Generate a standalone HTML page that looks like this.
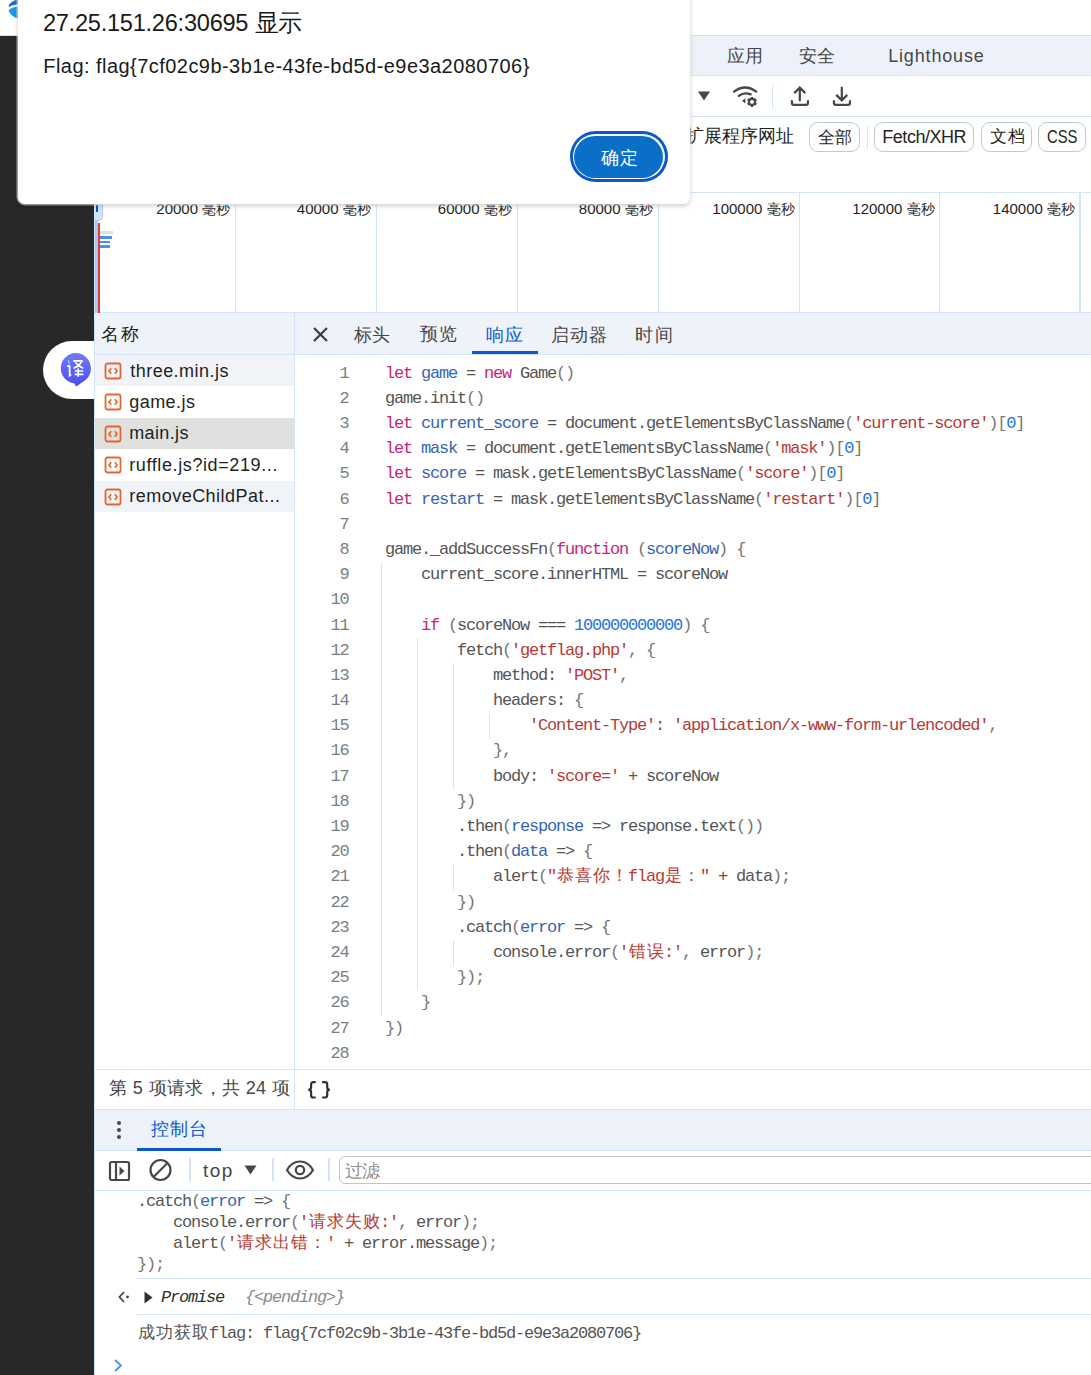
<!DOCTYPE html>
<html><head><meta charset="utf-8">
<style>
*{box-sizing:border-box;margin:0;padding:0}
html,body{width:1091px;height:1375px;overflow:hidden;background:#fff;position:relative;font-family:"Liberation Sans",sans-serif;color:#1f1f1f}
.a{position:absolute;white-space:pre}
.mono{font-family:"Liberation Mono",monospace;font-size:17px;line-height:17px;letter-spacing:-1.2px;color:#555}
.mono .w{display:inline-block;width:18px;text-align:center;letter-spacing:0;font-size:17px}
.ln{color:#7a7f84}
.k{color:#c9257a}
.v{color:#3565b6}
.s{color:#b83a32}
.n{color:#1a73e8}
.p{color:#777}
.chip{position:absolute;border:1px solid #c7c7c7;border-radius:9px;height:30px}
</style></head><body>

<!-- left dark strip -->
<div class="a" style="left:0;top:36px;width:95px;height:1339px;background:#282828"></div>
<!-- top line -->
<div class="a" style="left:0;top:35px;width:1091px;height:1px;background:#dadce0"></div>
<!-- edge logo partial -->
<svg class="a" style="left:6px;top:0" width="14" height="20" viewBox="0 0 14 20">
<path d="M2.6 5.6 C4 2.6 8 0 12 -0.5 L12 4.5 C9 4.5 5.5 5.5 3 7 Z" fill="#1c6fd0"/>
<path d="M2.5 10.5 C5 8 8 6.8 12 6.5 L12 18.5 C8 17.5 4 14.5 2.5 10.5 Z" fill="#1a98f2"/>
</svg>

<!-- translate pill -->
<div class="a" style="left:43px;top:340.5px;width:80px;height:58px;border-radius:29px;background:#fff"></div>
<svg class="a" style="left:58px;top:351px" width="36" height="38" viewBox="0 0 36 38">
<defs><linearGradient id="tg" x1="0" y1="0" x2="0" y2="1"><stop offset="0" stop-color="#7278f9"/><stop offset="1" stop-color="#4d4df0"/></linearGradient></defs>
<path d="M17.5 2 A15.3 15.3 0 1 1 17.8 32.6 L17.8 35.5 Q16.8 34 16.5 32.5 A15.3 15.3 0 0 1 17.5 2Z" fill="url(#tg)"/>
<path d="M26.5 28 Q22 34 17.8 35.5 L17.8 31Z" fill="#5050f0"/>
<path d="M10.4 10 L11.3 12.5" stroke="#3fe3ff" stroke-width="1.8" stroke-linecap="round"/>
<path d="M9.1 15.2 H11.6 V24.7 L13.3 23.3 M15.1 9.9 H23.9 Q21.8 14.8 15.6 17.3 M17.4 11.2 Q20.6 15.6 25.3 17.3 M16.6 20 H25.3 M16.6 23.3 H25.5 M20.2 17.6 V25.7" stroke="#fff" stroke-width="1.7" fill="none"/>
</svg>

<!-- devtools panel -->
<div class="a" style="left:95px;top:36px;width:996px;height:1339px;background:#fff"></div>
<div class="a" style="left:94px;top:36px;width:1px;height:1339px;background:#d3e3fd"></div>

<!-- main tab bar -->
<div class="a" style="left:95px;top:36px;width:996px;height:40px;background:#edf2fa"></div>
<div class="a" style="left:95px;top:75px;width:996px;height:1px;background:#d3e3fd"></div>

<!-- toolbar -->
<div class="a" style="left:95px;top:116px;width:996px;height:1px;background:#d3e3fd"></div>
<svg class="a" style="left:696px;top:90px" width="16" height="12" viewBox="0 0 16 12"><path d="M2 1.5 H14 L8 10.5Z" fill="#474747"/></svg>
<!-- wifi-gear icon -->
<svg class="a" style="left:731px;top:84px" width="28" height="24" viewBox="0 0 28 24">
<path d="M3 7.6 Q14.1 -0.6 25.2 7.6" stroke="#474747" stroke-width="2.3" fill="none" stroke-linecap="round"/>
<path d="M7.8 11.9 Q13.5 7.6 19.6 10.4" stroke="#474747" stroke-width="2.3" fill="none" stroke-linecap="round"/>
<path d="M11 16.4 L14.6 14.6 L14.1 19.4Z" fill="#474747"/>
<circle cx="21" cy="17.9" r="3" stroke="#474747" stroke-width="2.1" fill="none"/>
<path d="M21 12.9 V14.6 M21 21.2 V22.9 M16.7 15.4 L18.1 16.2 M23.9 19.6 L25.3 20.4 M16.7 20.4 L18.1 19.6 M23.9 16.2 L25.3 15.4" stroke="#474747" stroke-width="2.4"/>
</svg>
<div class="a" style="left:772px;top:85px;width:1px;height:24px;background:#d3e3fd"></div>
<!-- upload -->
<svg class="a" style="left:789px;top:86px" width="22" height="22" viewBox="0 0 22 22">
<path d="M10.8 15.2 V1.6 M5.3 7.1 L10.8 1.6 L16.3 7.1" stroke="#474747" stroke-width="2.2" fill="none"/>
<path d="M2.9 15 V16.7 Q2.9 18.8 5 18.8 H16.9 Q19 18.8 19 16.7 V15" stroke="#474747" stroke-width="2.2" fill="none" stroke-linecap="round"/>
</svg>
<!-- download -->
<svg class="a" style="left:831px;top:86px" width="22" height="22" viewBox="0 0 22 22">
<path d="M10.8 0.8 V14.4 M5.3 8.9 L10.8 14.4 L16.3 8.9" stroke="#474747" stroke-width="2.2" fill="none"/>
<path d="M2.9 15 V16.7 Q2.9 18.8 5 18.8 H16.9 Q19 18.8 19 16.7 V15" stroke="#474747" stroke-width="2.2" fill="none" stroke-linecap="round"/>
</svg>

<!-- filter row -->
<div class="chip" style="left:809px;top:122px;width:51px"></div>
<div class="a" style="left:867px;top:126px;width:1px;height:23px;background:#d3e3fd"></div>
<div class="chip" style="left:874px;top:122px;width:100px"></div>
<div class="chip" style="left:981px;top:122px;width:51px"></div>
<div class="chip" style="left:1038px;top:122px;width:48px"></div>

<!-- timeline -->
<div class="a" style="left:95px;top:192px;width:996px;height:1px;background:#d3e3fd"></div>
<div class="a" style="left:95px;top:312px;width:996px;height:1px;background:#d3e3fd"></div>
<div class="a" style="left:235px;top:193px;width:1px;height:119px;background:#d3e3fd"></div>
<div class="a" style="left:376px;top:193px;width:1px;height:119px;background:#d3e3fd"></div>
<div class="a" style="left:517px;top:193px;width:1px;height:119px;background:#d3e3fd"></div>
<div class="a" style="left:658px;top:193px;width:1px;height:119px;background:#d3e3fd"></div>
<div class="a" style="left:799px;top:193px;width:1px;height:119px;background:#d3e3fd"></div>
<div class="a" style="left:939px;top:193px;width:1px;height:119px;background:#d3e3fd"></div>
<div class="a" style="left:1079px;top:193px;width:2px;height:119px;background:#d3e3fd"></div>
<!-- timeline marks -->
<div class="a" style="left:95px;top:221px;width:3px;height:92px;background:#a8c7fa"></div>
<div class="a" style="left:95px;top:193px;width:8px;height:28px;background:#d3e3fd;border-right:1px solid #a8c7fa;border-bottom:1px solid #a8c7fa;border-bottom-right-radius:5px"></div>
<div class="a" style="left:96px;top:205px;width:2px;height:7px;background:#0b57d0"></div>
<div class="a" style="left:98.2px;top:223px;width:1.7px;height:90px;background:#e53b2f"></div>
<div class="a" style="left:100px;top:231px;width:12.5px;height:3px;background:#dfe1df"></div>
<div class="a" style="left:100px;top:236px;width:12px;height:3px;background:#4c8df6"></div>
<div class="a" style="left:100px;top:240.5px;width:10px;height:2.7px;background:#4c8df6"></div>
<div class="a" style="left:100px;top:244.8px;width:10px;height:3px;background:#4c8df6"></div>

<!-- split header -->
<div class="a" style="left:95px;top:313px;width:996px;height:41px;background:#eef2f9"></div>
<div class="a" style="left:95px;top:354px;width:996px;height:1px;background:#d3e3fd"></div>
<svg class="a" style="left:312px;top:326px" width="17" height="17" viewBox="0 0 17 17"><path d="M2 2 L15 15 M15 2 L2 15" stroke="#3c3c3c" stroke-width="2.2"/></svg>
<div class="a" style="left:472px;top:351px;width:66px;height:3px;background:#0b57d0"></div>

<!-- file list -->
<div class="a" style="left:95px;top:355px;width:199px;height:31px;background:#f0f4f9"></div>
<div class="a" style="left:95px;top:418px;width:199px;height:31px;background:#dfe1df"></div>
<div class="a" style="left:95px;top:481px;width:199px;height:31px;background:#f0f4f9"></div>
<div class="a" style="left:294px;top:313px;width:1px;height:796px;background:#d3e3fd"></div>

<svg class="a" style="left:104px;top:361.7px" width="18" height="18" viewBox="0 0 18 18"><rect x="1.5" y="1.5" width="15" height="15" rx="2" stroke="#e8642c" stroke-width="1.8" fill="none"/><path d="M7.2 6.3 L5 9 L7.2 11.7 M10.8 6.3 L13 9 L10.8 11.7" stroke="#e8642c" stroke-width="1.7" fill="none"/></svg>
<svg class="a" style="left:104px;top:393.2px" width="18" height="18" viewBox="0 0 18 18"><rect x="1.5" y="1.5" width="15" height="15" rx="2" stroke="#e8642c" stroke-width="1.8" fill="none"/><path d="M7.2 6.3 L5 9 L7.2 11.7 M10.8 6.3 L13 9 L10.8 11.7" stroke="#e8642c" stroke-width="1.7" fill="none"/></svg>
<svg class="a" style="left:104px;top:424.6px" width="18" height="18" viewBox="0 0 18 18"><rect x="1.5" y="1.5" width="15" height="15" rx="2" stroke="#e8642c" stroke-width="1.8" fill="none"/><path d="M7.2 6.3 L5 9 L7.2 11.7 M10.8 6.3 L13 9 L10.8 11.7" stroke="#e8642c" stroke-width="1.7" fill="none"/></svg>
<svg class="a" style="left:104px;top:456.1px" width="18" height="18" viewBox="0 0 18 18"><rect x="1.5" y="1.5" width="15" height="15" rx="2" stroke="#e8642c" stroke-width="1.8" fill="none"/><path d="M7.2 6.3 L5 9 L7.2 11.7 M10.8 6.3 L13 9 L10.8 11.7" stroke="#e8642c" stroke-width="1.7" fill="none"/></svg>
<svg class="a" style="left:104px;top:487.5px" width="18" height="18" viewBox="0 0 18 18"><rect x="1.5" y="1.5" width="15" height="15" rx="2" stroke="#e8642c" stroke-width="1.8" fill="none"/><path d="M7.2 6.3 L5 9 L7.2 11.7 M10.8 6.3 L13 9 L10.8 11.7" stroke="#e8642c" stroke-width="1.7" fill="none"/></svg>

<!-- code -->
<div class="a" style="left:381px;top:562.5px;width:1px;height:453.4px;background:#d3e3fd;"></div>
<div class="a" style="left:417px;top:638.1px;width:1px;height:352.7px;background:#d3e3fd;"></div>
<div class="a" style="left:453px;top:663.3px;width:1px;height:126.0px;background:#d3e3fd;"></div>
<div class="a" style="left:489px;top:713.7px;width:1px;height:25.2px;background:#d3e3fd;"></div>
<div class="a" style="left:453px;top:864.8px;width:1px;height:25.2px;background:#d3e3fd;"></div>
<div class="a" style="left:453px;top:940.4px;width:1px;height:25.2px;background:#d3e3fd;"></div>
<div class="a mono ln" style="left:288.5px;width:60px;text-align:right;top:364.61px">1</div>
<div class="a mono" style="left:385px;top:364.61px"><span class="k">let</span> <span class="v">game</span> = <span class="k">new</span> Game<span class="p">()</span></div>
<div class="a mono ln" style="left:288.5px;width:60px;text-align:right;top:389.80px">2</div>
<div class="a mono" style="left:385px;top:389.80px">game.init<span class="p">()</span></div>
<div class="a mono ln" style="left:288.5px;width:60px;text-align:right;top:414.99px">3</div>
<div class="a mono" style="left:385px;top:414.99px"><span class="k">let</span> <span class="v">current_score</span> = document.getElementsByClassName<span class="p">(</span><span class="s">&#x27;current-score&#x27;</span><span class="p">)[</span><span class="n">0</span><span class="p">]</span></div>
<div class="a mono ln" style="left:288.5px;width:60px;text-align:right;top:440.18px">4</div>
<div class="a mono" style="left:385px;top:440.18px"><span class="k">let</span> <span class="v">mask</span> = document.getElementsByClassName<span class="p">(</span><span class="s">&#x27;mask&#x27;</span><span class="p">)[</span><span class="n">0</span><span class="p">]</span></div>
<div class="a mono ln" style="left:288.5px;width:60px;text-align:right;top:465.37px">5</div>
<div class="a mono" style="left:385px;top:465.37px"><span class="k">let</span> <span class="v">score</span> = mask.getElementsByClassName<span class="p">(</span><span class="s">&#x27;score&#x27;</span><span class="p">)[</span><span class="n">0</span><span class="p">]</span></div>
<div class="a mono ln" style="left:288.5px;width:60px;text-align:right;top:490.56px">6</div>
<div class="a mono" style="left:385px;top:490.56px"><span class="k">let</span> <span class="v">restart</span> = mask.getElementsByClassName<span class="p">(</span><span class="s">&#x27;restart&#x27;</span><span class="p">)[</span><span class="n">0</span><span class="p">]</span></div>
<div class="a mono ln" style="left:288.5px;width:60px;text-align:right;top:515.75px">7</div>
<div class="a mono ln" style="left:288.5px;width:60px;text-align:right;top:540.94px">8</div>
<div class="a mono" style="left:385px;top:540.94px">game._addSuccessFn<span class="p">(</span><span class="k">function</span> <span class="p">(</span><span class="v">scoreNow</span><span class="p">)</span> <span class="p">{</span></div>
<div class="a mono ln" style="left:288.5px;width:60px;text-align:right;top:566.13px">9</div>
<div class="a mono" style="left:385px;top:566.13px">    current_score.innerHTML = scoreNow</div>
<div class="a mono ln" style="left:288.5px;width:60px;text-align:right;top:591.32px">10</div>
<div class="a mono ln" style="left:288.5px;width:60px;text-align:right;top:616.51px">11</div>
<div class="a mono" style="left:385px;top:616.51px">    <span class="k">if</span> <span class="p">(</span>scoreNow === <span class="n">100000000000</span><span class="p">)</span> <span class="p">{</span></div>
<div class="a mono ln" style="left:288.5px;width:60px;text-align:right;top:641.70px">12</div>
<div class="a mono" style="left:385px;top:641.70px">        fetch<span class="p">(</span><span class="s">&#x27;getflag.php&#x27;</span><span class="p">,</span> <span class="p">{</span></div>
<div class="a mono ln" style="left:288.5px;width:60px;text-align:right;top:666.89px">13</div>
<div class="a mono" style="left:385px;top:666.89px">            method: <span class="s">&#x27;POST&#x27;</span><span class="p">,</span></div>
<div class="a mono ln" style="left:288.5px;width:60px;text-align:right;top:692.08px">14</div>
<div class="a mono" style="left:385px;top:692.08px">            headers: <span class="p">{</span></div>
<div class="a mono ln" style="left:288.5px;width:60px;text-align:right;top:717.27px">15</div>
<div class="a mono" style="left:385px;top:717.27px">                <span class="s">&#x27;Content-Type&#x27;</span>: <span class="s">&#x27;application/x-www-form-urlencoded&#x27;</span><span class="p">,</span></div>
<div class="a mono ln" style="left:288.5px;width:60px;text-align:right;top:742.46px">16</div>
<div class="a mono" style="left:385px;top:742.46px">            <span class="p">},</span></div>
<div class="a mono ln" style="left:288.5px;width:60px;text-align:right;top:767.65px">17</div>
<div class="a mono" style="left:385px;top:767.65px">            body: <span class="s">&#x27;score=&#x27;</span> + scoreNow</div>
<div class="a mono ln" style="left:288.5px;width:60px;text-align:right;top:792.84px">18</div>
<div class="a mono" style="left:385px;top:792.84px">        <span class="p">})</span></div>
<div class="a mono ln" style="left:288.5px;width:60px;text-align:right;top:818.03px">19</div>
<div class="a mono" style="left:385px;top:818.03px">        .then<span class="p">(</span><span class="v">response</span> =&gt; response.text<span class="p">())</span></div>
<div class="a mono ln" style="left:288.5px;width:60px;text-align:right;top:843.22px">20</div>
<div class="a mono" style="left:385px;top:843.22px">        .then<span class="p">(</span><span class="v">data</span> =&gt; <span class="p">{</span></div>
<div class="a mono ln" style="left:288.5px;width:60px;text-align:right;top:868.41px">21</div>
<div class="a mono" style="left:385px;top:868.41px">            alert<span class="p">(</span><span class="s">&quot;<span class="w">恭</span><span class="w">喜</span><span class="w">你</span><span class="w">！</span>flag<span class="w">是</span><span class="w">：</span>&quot;</span> + data<span class="p">);</span></div>
<div class="a mono ln" style="left:288.5px;width:60px;text-align:right;top:893.60px">22</div>
<div class="a mono" style="left:385px;top:893.60px">        <span class="p">})</span></div>
<div class="a mono ln" style="left:288.5px;width:60px;text-align:right;top:918.79px">23</div>
<div class="a mono" style="left:385px;top:918.79px">        .catch<span class="p">(</span><span class="v">error</span> =&gt; <span class="p">{</span></div>
<div class="a mono ln" style="left:288.5px;width:60px;text-align:right;top:943.98px">24</div>
<div class="a mono" style="left:385px;top:943.98px">            console.error<span class="p">(</span><span class="s">&#x27;<span class="w">错</span><span class="w">误</span>:&#x27;</span><span class="p">,</span> error<span class="p">);</span></div>
<div class="a mono ln" style="left:288.5px;width:60px;text-align:right;top:969.17px">25</div>
<div class="a mono" style="left:385px;top:969.17px">        <span class="p">});</span></div>
<div class="a mono ln" style="left:288.5px;width:60px;text-align:right;top:994.36px">26</div>
<div class="a mono" style="left:385px;top:994.36px">    <span class="p">}</span></div>
<div class="a mono ln" style="left:288.5px;width:60px;text-align:right;top:1019.55px">27</div>
<div class="a mono" style="left:385px;top:1019.55px"><span class="p">})</span></div>
<div class="a mono ln" style="left:288.5px;width:60px;text-align:right;top:1044.74px">28</div>

<!-- status bar -->
<div class="a" style="left:95px;top:1069px;width:996px;height:1px;background:#d3e3fd"></div>
<svg class="a" style="left:306px;top:1080px" width="27" height="20" viewBox="0 0 27 20">
<path d="M9.7 2.2 H7.3 Q5.1 2.2 5.1 4.4 V7.6 Q5.1 9.8 2.3 9.8 Q5.1 9.8 5.1 12 V15.2 Q5.1 17.5 7.3 17.5 H9.7" stroke="#303030" stroke-width="2.2" fill="none"/>
<path d="M16.1 2.2 H18.5 Q21.2 2.2 21.2 4.4 V7.6 Q21.2 9.8 23.8 9.8 Q21.2 9.8 21.2 12 V15.2 Q21.2 17.5 18.5 17.5 H16.1" stroke="#303030" stroke-width="2.2" fill="none"/>
</svg>

<!-- console tab bar -->
<div class="a" style="left:95px;top:1109px;width:996px;height:42px;background:#edf2fa"></div>
<div class="a" style="left:95px;top:1109px;width:996px;height:1px;background:#d3e3fd"></div>
<div class="a" style="left:95px;top:1150px;width:996px;height:1px;background:#d3e3fd"></div>
<div class="a" style="left:117px;top:1120.5px;width:4px;height:4px;border-radius:2px;background:#474747"></div>
<div class="a" style="left:117px;top:1127.5px;width:4px;height:4px;border-radius:2px;background:#474747"></div>
<div class="a" style="left:117px;top:1134.5px;width:4px;height:4px;border-radius:2px;background:#474747"></div>
<div class="a" style="left:137px;top:1148px;width:84px;height:3px;background:#0b57d0"></div>

<!-- console toolbar -->
<div class="a" style="left:95px;top:1190px;width:996px;height:1px;background:#d3e3fd"></div>
<svg class="a" style="left:108px;top:1159.5px" width="24" height="23" viewBox="0 0 24 23">
<rect x="2" y="2" width="19" height="18" rx="1.5" stroke="#474747" stroke-width="2.2" fill="none"/>
<path d="M8 2 V20" stroke="#474747" stroke-width="2.2"/>
<path d="M11.5 6.5 L16.5 11 L11.5 15.5Z" fill="#474747"/>
</svg>
<svg class="a" style="left:148px;top:1158px" width="25" height="24" viewBox="0 0 25 24">
<circle cx="12.5" cy="12" r="10" stroke="#474747" stroke-width="2.2" fill="none"/>
<path d="M5.5 19 L19.5 5" stroke="#474747" stroke-width="2.2"/>
</svg>
<div class="a" style="left:189px;top:1158px;width:2px;height:23px;background:#d3e3fd"></div>
<svg class="a" style="left:243px;top:1164px" width="15" height="12" viewBox="0 0 15 12"><path d="M1.5 1.5 H13.5 L7.5 10.5Z" fill="#474747"/></svg>
<div class="a" style="left:272px;top:1158px;width:2px;height:23px;background:#d3e3fd"></div>
<svg class="a" style="left:285px;top:1160px" width="30" height="20" viewBox="0 0 30 20">
<path d="M2 10 C6 3 10 1.5 15 1.5 C20 1.5 24 3 28 10 C24 17 20 18.5 15 18.5 C10 18.5 6 17 2 10Z" stroke="#474747" stroke-width="2.2" fill="none"/>
<circle cx="15" cy="10" r="4.2" stroke="#474747" stroke-width="2.2" fill="none"/>
</svg>
<div class="a" style="left:328px;top:1158px;width:2px;height:23px;background:#d3e3fd"></div>
<div class="a" style="left:339px;top:1156px;width:800px;height:28px;border:1px solid #c4c4c4;border-radius:6px"></div>

<div class="a" style="left:726.50px;top:47.10px;font:18px/18px 'Liberation Sans',sans-serif;letter-spacing:0px;color:#474747;">应用</div>
<div class="a" style="left:798.50px;top:47.10px;font:18px/18px 'Liberation Sans',sans-serif;letter-spacing:0px;color:#474747;">安全</div>
<div class="a" style="left:888.20px;top:46.86px;font:18px/18px 'Liberation Sans',sans-serif;letter-spacing:0.833px;color:#474747;">Lighthouse</div>
<div class="a" style="left:685.50px;top:127.30px;font:18px/18px 'Liberation Sans',sans-serif;letter-spacing:0.0px;color:#1f1f1f;">扩展程序网址</div>
<div class="a" style="left:817.50px;top:128.50px;font:17px/17px 'Liberation Sans',sans-serif;letter-spacing:0.3px;color:#1f1f1f;">全部</div>
<div class="a" style="left:882.30px;top:127.56px;font:18px/18px 'Liberation Sans',sans-serif;letter-spacing:-0.475px;color:#1f1f1f;">Fetch/XHR</div>
<div class="a" style="left:989.90px;top:128.40px;font:17px/17px 'Liberation Sans',sans-serif;letter-spacing:0.7px;color:#1f1f1f;">文档</div>
<div class="a" style="left:1047.20px;top:127.66px;font:18px/18px 'Liberation Sans',sans-serif;letter-spacing:0px;color:#1f1f1f;transform:scaleX(0.823);transform-origin:0 0;">CSS</div>
<div class="a" style="left:100.90px;top:324.60px;font:18px/18px 'Liberation Sans',sans-serif;letter-spacing:1.7px;color:#1f1f1f;">名称</div>
<div class="a" style="left:354.40px;top:325.60px;font:18px/18px 'Liberation Sans',sans-serif;letter-spacing:0.0px;color:#474747;">标头</div>
<div class="a" style="left:420.20px;top:325.10px;font:18px/18px 'Liberation Sans',sans-serif;letter-spacing:0.9px;color:#474747;">预览</div>
<div class="a" style="left:486.00px;top:325.60px;font:18px/18px 'Liberation Sans',sans-serif;letter-spacing:1.2px;color:#0b57d0;">响应</div>
<div class="a" style="left:551.40px;top:325.60px;font:18px/18px 'Liberation Sans',sans-serif;letter-spacing:0.95px;color:#474747;">启动器</div>
<div class="a" style="left:634.80px;top:325.60px;font:18px/18px 'Liberation Sans',sans-serif;letter-spacing:2.3px;color:#474747;">时间</div>
<div class="a" style="left:109.10px;top:1079.00px;font:18px/18px 'Liberation Sans',sans-serif;letter-spacing:0.362px;color:#474747;">第 5 项请求，共 24 项</div>
<div class="a" style="left:151.40px;top:1120.20px;font:18px/18px 'Liberation Sans',sans-serif;letter-spacing:0.8px;color:#0b57d0;">控制台</div>
<div class="a" style="left:203.00px;top:1160.72px;font:19px/19px 'Liberation Sans',sans-serif;letter-spacing:1.45px;color:#474747;">top</div>
<div class="a" style="left:344.70px;top:1161.50px;font:18px/18px 'Liberation Sans',sans-serif;letter-spacing:-1.1px;color:#8f8f8f;">过滤</div>
<div class="a" style="left:130.20px;top:361.56px;font:18px/18px 'Liberation Sans',sans-serif;letter-spacing:0.482px;color:#1f1f1f;">three.min.js</div>
<div class="a" style="left:129.20px;top:393.02px;font:18px/18px 'Liberation Sans',sans-serif;letter-spacing:0.467px;color:#1f1f1f;">game.js</div>
<div class="a" style="left:129.20px;top:424.48px;font:18px/18px 'Liberation Sans',sans-serif;letter-spacing:0.367px;color:#1f1f1f;">main.js</div>
<div class="a" style="left:129.20px;top:455.94px;font:18px/18px 'Liberation Sans',sans-serif;letter-spacing:0.611px;color:#1f1f1f;">ruffle.js?id=219...</div>
<div class="a" style="left:129.20px;top:487.40px;font:18px/18px 'Liberation Sans',sans-serif;letter-spacing:0.488px;color:#1f1f1f;">removeChildPat...</div>
<div class="a" style="left:156.30px;top:201.10px;font:15px/15px 'Liberation Sans',sans-serif;letter-spacing:0px;color:#1f1f1f;">20000 <span style="font-size:13.5px">毫秒</span></div>
<div class="a" style="left:296.80px;top:201.10px;font:15px/15px 'Liberation Sans',sans-serif;letter-spacing:0px;color:#1f1f1f;">40000 <span style="font-size:13.5px">毫秒</span></div>
<div class="a" style="left:437.80px;top:201.10px;font:15px/15px 'Liberation Sans',sans-serif;letter-spacing:0px;color:#1f1f1f;">60000 <span style="font-size:13.5px">毫秒</span></div>
<div class="a" style="left:578.80px;top:201.10px;font:15px/15px 'Liberation Sans',sans-serif;letter-spacing:0px;color:#1f1f1f;">80000 <span style="font-size:13.5px">毫秒</span></div>
<div class="a" style="left:712.30px;top:201.10px;font:15px/15px 'Liberation Sans',sans-serif;letter-spacing:0px;color:#1f1f1f;">100000 <span style="font-size:13.5px">毫秒</span></div>
<div class="a" style="left:852.30px;top:201.10px;font:15px/15px 'Liberation Sans',sans-serif;letter-spacing:0px;color:#1f1f1f;">120000 <span style="font-size:13.5px">毫秒</span></div>
<div class="a" style="left:992.80px;top:201.10px;font:15px/15px 'Liberation Sans',sans-serif;letter-spacing:0px;color:#1f1f1f;">140000 <span style="font-size:13.5px">毫秒</span></div>
<!-- console output -->
<div class="a" style="left:137px;top:1278px;width:954px;height:1px;background:#d3e3fd"></div>
<div class="a" style="left:137px;top:1314px;width:954px;height:1px;background:#d3e3fd"></div>
<svg class="a" style="left:117px;top:1289.5px" width="14" height="14" viewBox="0 0 14 14"><path d="M7 2 L2.5 7 L7 12" stroke="#474747" stroke-width="1.8" fill="none"/><circle cx="10.5" cy="7" r="1.4" fill="#474747"/></svg>
<svg class="a" style="left:143px;top:1290px" width="11" height="15" viewBox="0 0 11 15"><path d="M1.5 1.5 L9.5 7.5 L1.5 13.5Z" fill="#303030"/></svg>
<div class="a" style="left:161px;top:1289px;font:italic 17px/17px 'Liberation Mono',monospace;letter-spacing:-1.2px;color:#303030">Promise</div>
<div class="a" style="left:245px;top:1289px;font:italic 17px/17px 'Liberation Mono',monospace;letter-spacing:-1.2px;color:#8a8a8a">{&lt;pending&gt;}</div>
<div class="a mono" style="left:137px;top:1193.21px">.catch<span class="p">(</span><span class="v">error</span> =&gt; <span class="p">{</span></div>
<div class="a mono" style="left:137px;top:1214.21px">    console.error<span class="p">(</span><span class="s">&#x27;<span class="w">请</span><span class="w">求</span><span class="w">失</span><span class="w">败</span>:&#x27;</span><span class="p">,</span> error<span class="p">);</span></div>
<div class="a mono" style="left:137px;top:1235.21px">    alert<span class="p">(</span><span class="s">&#x27;<span class="w">请</span><span class="w">求</span><span class="w">出</span><span class="w">错</span><span class="w">：</span>&#x27;</span> + error.message<span class="p">);</span></div>
<div class="a mono" style="left:137px;top:1256.21px"><span class="p">});</span></div>
<div class="a mono" style="left:137px;top:1324.81px"><span class="w">成</span><span class="w">功</span><span class="w">获</span><span class="w">取</span>flag: flag{7cf02c9b-3b1e-43fe-bd5d-e9e3a2080706}</div>
<svg class="a" style="left:112px;top:1358px" width="12" height="15" viewBox="0 0 12 15"><path d="M3 2 L9 7.5 L3 13" stroke="#4f8cf0" stroke-width="1.8" fill="none"/></svg>

<!-- dialog -->
<div class="a" style="left:18px;top:-12px;width:672px;height:216px;background:#fff;border-radius:7px;box-shadow:0 2px 5px rgba(0,0,0,.2),0 0 0 1.5px rgba(255,255,255,.6)"></div>
<div class="a" style="left:569.5px;top:131px;width:98px;height:51px;border-radius:26px;background:#0b57d0"></div>
<div class="a" style="left:572.5px;top:134px;width:92px;height:45px;border-radius:23px;background:#fff"></div>
<div class="a" style="left:574px;top:135.5px;width:89px;height:42px;border-radius:21px;background:#0b6fc8"></div>

<div class="a" style="left:42.90px;top:11.82px;font:23.6px/23.6px 'Liberation Sans',sans-serif;letter-spacing:-0.255px;color:#1a1a1a;">27.25.151.26:30695 显示</div>
<div class="a" style="left:43.30px;top:55.67px;font:20px/20px 'Liberation Sans',sans-serif;letter-spacing:0.451px;color:#1a1a1a;">Flag: flag{7cf02c9b-3b1e-43fe-bd5d-e9e3a2080706}</div>
<div class="a" style="left:601.00px;top:149.00px;font:18px/18px 'Liberation Sans',sans-serif;letter-spacing:1.0px;color:#ffffff;">确定</div>
</body></html>
